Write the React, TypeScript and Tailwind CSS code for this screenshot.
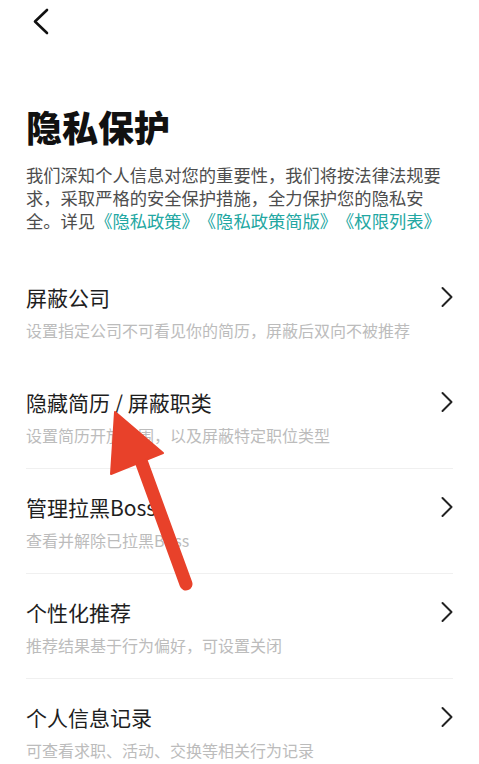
import React from 'react';

const items = [
  { title: '屏蔽公司', desc: '设置指定公司不可看见你的简历，屏蔽后双向不被推荐', line: false },
  { title: '隐藏简历 / 屏蔽职类', desc: '设置简历开放范围，以及屏蔽特定职位类型', line: false },
  { title: '管理拉黑Boss', desc: '查看并解除已拉黑Boss', line: true },
  { title: '个性化推荐', desc: '推荐结果基于行为偏好，可设置关闭', line: true },
  { title: '个人信息记录', desc: '可查看求职、活动、交换等相关行为记录', line: true },
];

const Chevron = () => (
  <svg width="14" height="22" viewBox="0 0 14 22" fill="none">
    <path d="M2.5 2 L11.5 11 L2.5 20" stroke="#222" strokeWidth="2" strokeLinecap="round" strokeLinejoin="round" />
  </svg>
);

export default function App() {
  return (
    <div
      className="relative w-[479px] h-[764px] bg-white overflow-hidden [text-spacing-trim:space-all]"
      style={{ fontFamily: '"Noto Sans CJK SC", "Noto Sans", sans-serif' }}
    >
      {/* back */}
      <div className="h-[44px] pl-[32px] pt-[8px]">
        <svg width="18" height="28" viewBox="0 0 18 28" fill="none">
          <path d="M15 2 L3 13.5 L15 25" stroke="#111" strokeWidth="2.6" strokeLinecap="round" strokeLinejoin="round" />
        </svg>
      </div>

      <div className="px-[26px]">
        <h1 className="mt-[60px] text-[36px] leading-[44px] font-extrabold text-[#111]">隐私保护</h1>
        <p className="mt-[15px] text-[17.3px] leading-[23px] text-[#4d4d4d]">
          我们深知个人信息对您的重要性，我们将按法律法规要求，采取严格的安全保护措施，全力保护您的隐私安全。详见
          <span className="text-[#22a7a2]">《隐私政策》《隐私政策简版》《权限列表》</span>
        </p>

        <div className="mt-[26px]">
          {items.map((it) => (
            <div
              key={it.title}
              className={`flex items-start justify-between pt-[24px] pb-[22px] border-t ${it.line ? 'border-[#f0f0f0]' : 'border-transparent'}`}
            >
              <div>
                <div className="text-[21px] leading-[28px] text-[#1e1e1e]">{it.title}</div>
                <div className="mt-[8px] text-[16px] leading-[22px] text-[#bcbcbc]">{it.desc}</div>
              </div>
              <div className="mt-[3px] mr-[-1px]">
                <Chevron />
              </div>
            </div>
          ))}
        </div>
      </div>

      {/* red annotation arrow */}
      <svg className="absolute left-0 top-0 pointer-events-none" width="479" height="764" viewBox="0 0 479 764">
        <line x1="140" y1="458" x2="186" y2="584" stroke="#e8412a" strokeWidth="13" strokeLinecap="round" />
        <polygon points="115,412 163,453 111,474" fill="#e8412a" strokeLinejoin="round" stroke="#e8412a" strokeWidth="2" />
      </svg>
    </div>
  );
}
